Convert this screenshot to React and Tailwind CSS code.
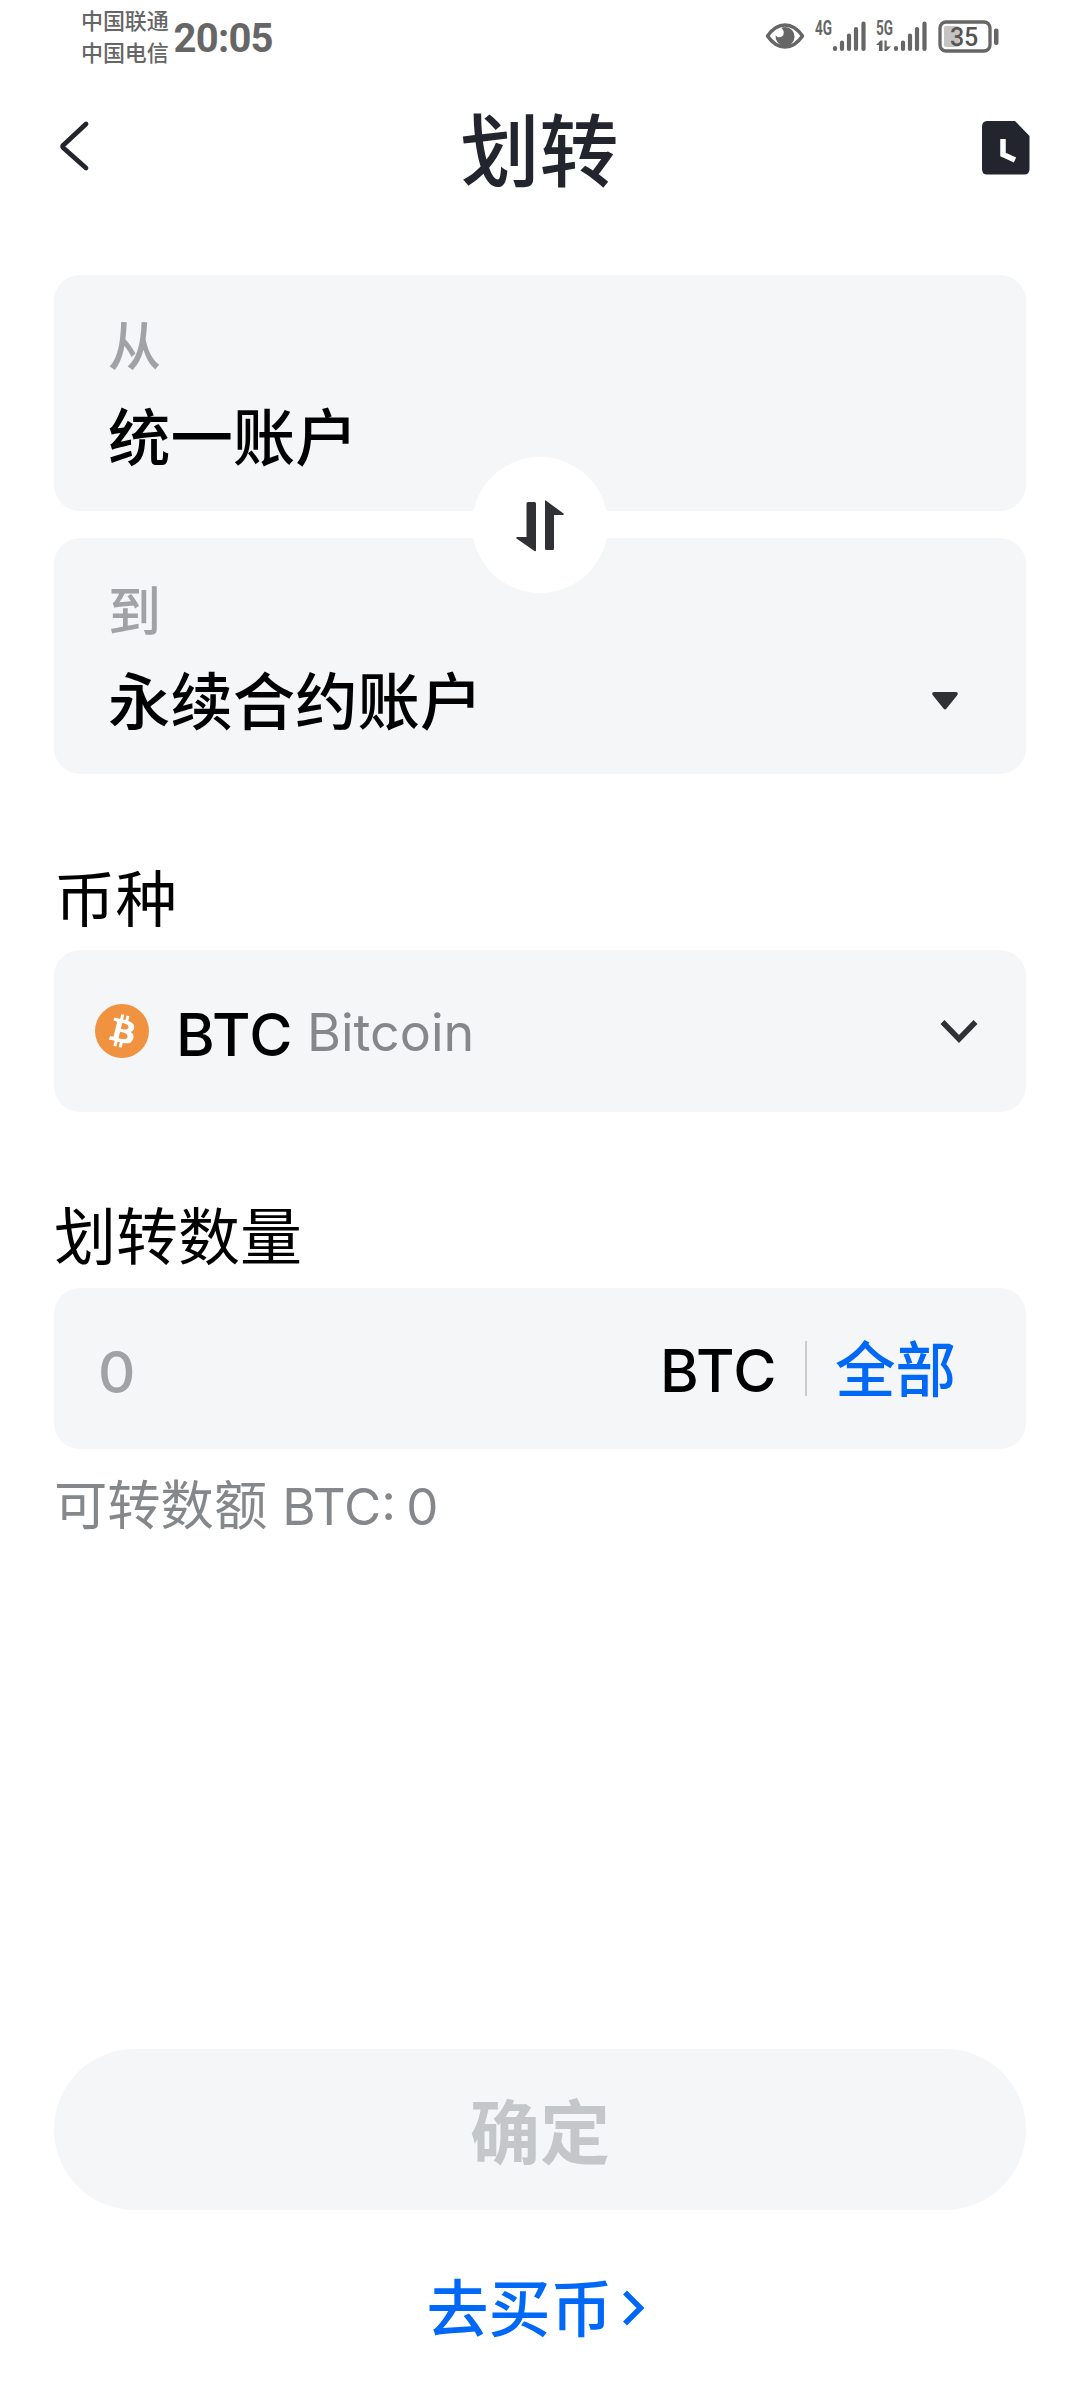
import React, { useState } from "react";

function SignalBars({ className }) {
  return (
    <svg className={className} width="34" height="32" viewBox="0 0 34 32" fill="none" stroke="#666" strokeWidth="4.2" strokeLinecap="round">
      <path d="M3 28v1M10 22.500v6.500M17 15.500v13.500M24 9v20M31.500 3.500v25.500" />
    </svg>
  );
}

function NetworkLabel({ text, data }) {
  return (
    <svg className="-mt-2 overflow-visible" width="18" height="40" viewBox="0 0 18 40" fill="#666">
      <text x="0" y="22.500" fontSize="20" fontWeight="700" textLength="17" lengthAdjust="spacingAndGlyphs" className="font-[Roboto,sans-serif]">
        {text}
      </text>
      {data && <path d="M3 39V33H0L4.500 28.500H6.500V39zM8.500 28.500h2.200v6H15l-4.500 4.500h-2z" />}
    </svg>
  );
}

function StatusBar() {
  return (
    <div className="flex h-[76px] items-start justify-between pl-[81px] pr-[80px] text-[#666]">
      <div className="flex">
        <div className="pt-[3px] text-[22px] leading-[32px] font-medium tracking-[-0.1px] font-['Noto_Sans_CJK_SC',sans-serif]">
          <div>中国联通</div>
          <div>中国电信</div>
        </div>
        <div className="ml-[5px] pt-[19px] font-[Roboto,sans-serif] text-[40px] leading-[40px] font-bold tracking-[-0.8px]">20:05</div>
      </div>
      <div className="flex">
        <svg className="mt-[22px]" width="40" height="28" viewBox="0 0 40 28" fill="none">
          <path d="M2.500 14C8 6 13.500 3 20 3s12 3 17.500 11C32 22 26.500 25 20 25S8 22 2.500 14z" stroke="#666" strokeWidth="3.500" strokeLinejoin="round" />
          <path d="M20 5a9.500 9.500 0 1 1-9.300 8c1.500 3.500 7.500 3 8-1.500.3-2.500-.7-4-2.200-5.500A9 9 0 0 1 20 5z" fill="#666" />
        </svg>
        <div className="ml-[10px] mt-5 flex">
          <NetworkLabel text="4G" />
          <SignalBars className="-ml-[1px]" />
        </div>
        <div className="ml-[10px] mt-5 flex">
          <NetworkLabel text="5G" data />
          <SignalBars className="-ml-[1px]" />
        </div>
        <svg className="mt-5 ml-[11px]" width="62" height="34" viewBox="0 0 62 34">
          <rect x="2" y="2" width="50" height="29" rx="6" fill="none" stroke="#666" strokeWidth="3.300" />
          <rect x="6" y="6" width="15" height="21" rx="2" fill="#c4c4c4" />
          <rect x="56" y="8.500" width="4.500" height="16.500" rx="2" fill="#666" />
          <text x="26" y="25.500" textAnchor="middle" fontSize="25" fontWeight="500" letterSpacing="-0.300" fill="#555" className="font-[Roboto,sans-serif]">
            35
          </text>
        </svg>
      </div>
    </div>
  );
}

function Header() {
  return (
    <header className="flex h-[199px] items-start justify-between pl-[58px] pr-[49px] text-[#22252e]">
      <button type="button" aria-label="返回" className="mt-[43px] w-[50px]">
        <svg width="34" height="54" viewBox="0 0 34 54" fill="none" stroke="currentColor" strokeWidth="4.800" strokeLinecap="round" strokeLinejoin="round">
          <path d="M28 5L5.500 26Q4 27.500 5.500 29L28 49" />
        </svg>
      </button>
      <h1 className="mt-[21px] -ml-[10px] text-[79px] leading-[110px] font-medium">划转</h1>
      <button type="button" aria-label="记录" className="mt-[45px]">
        <svg width="50" height="54" viewBox="0 0 50 54">
          <path d="M6 0H34L48.500 15V48Q48.500 53.500 43 53.500H6Q1 53.500 1 48V6Q1 0 6 0z" fill="currentColor" />
          <path d="M22 18v15.500L34 39" fill="none" stroke="#fff" strokeWidth="5.500" />
        </svg>
      </button>
    </header>
  );
}

export default function App() {
  const [amount, setAmount] = useState("");
  const [swapped, setSwapped] = useState(false);
  const accounts = swapped ? ["永续合约账户", "统一账户"] : ["统一账户", "永续合约账户"];

  return (
    <div className="flex h-[2400px] w-[1080px] flex-col overflow-hidden bg-white text-black font-[Inter,'Noto_Sans_CJK_SC',sans-serif]">
      <StatusBar />
      <Header />
      <main className="px-[54px]">
        <div className="relative flex flex-col gap-[27px]">
          <div className="h-[236px] rounded-[26px] bg-[#f4f6f7] px-[54px] pt-[36px]">
            <div className="text-[53px] leading-[72px] font-medium text-[#9fa3a6]">从</div>
            <div className="mt-[12px] text-[62.4px] leading-[88px] font-medium">{accounts[0]}</div>
          </div>
          <div className="flex h-[236px] justify-between rounded-[26px] bg-[#f4f6f7] pl-[54px] pr-[68px] pt-[38px]">
            <div>
              <div className="text-[53px] leading-[72px] font-medium text-[#9fa3a6]">到</div>
              <div className="mt-[11px] text-[62.4px] leading-[88px] font-medium">{accounts[1]}</div>
            </div>
            <svg className="mt-[116px]" width="26" height="18" viewBox="0 0 26 18" fill="#303134">
              <path d="M2 0H24Q27 .5 25 3.500L14.500 16.500Q13 18.500 11.500 16.500L1 3.500Q-1 .5 2 0z" />
            </svg>
          </div>
          <button
            type="button"
            aria-label="互换"
            onClick={() => setSwapped(!swapped)}
            className="absolute top-[182px] left-[418px] flex size-[136px] items-center justify-center rounded-full bg-white"
          >
            <svg className="mt-[2px]" width="48" height="52" viewBox="0 0 48 52" fill="#303134">
              <path d="M10.500 3.500Q10.500 2 12 2H18.500Q20 2 20 3.500V50Q20 52 18.500 51L.5 38.500Q-.5 37 1.500 37H10.500zM29 1.500Q29-.5 30.500 1L47.500 13.500Q48.500 15 46.500 15H38V48.500Q38 50 36.500 50H30.500Q29 50 29 48.500z" />
            </svg>
          </button>
        </div>

        <h2 className="mt-[82px] text-[61.5px] leading-[88px]">币种</h2>
        <button type="button" className="mt-[6px] flex h-[162px] w-full items-center rounded-[26px] bg-[#f4f6f7] pl-[41px] pr-[48px]">
          <svg className="size-[54px]" viewBox="0 0 32 32">
            <circle cx="16" cy="16" r="16" fill="#f09240" />
            <path
              fill="#fff"
              d="M23.189 14.020c.314-2.096-1.283-3.223-3.465-3.975l.708-2.840-1.728-.430-.690 2.765c-.454-.114-.920-.220-1.385-.326l.695-2.783L15.596 6l-.708 2.839c-.376-.086-.746-.170-1.104-.260l.002-.009-2.384-.595-.460 1.846s1.283.294 1.256.312c.700.175.826.638.805 1.006l-.806 3.235c.048.012.110.030.180.057l-.183-.045-1.130 4.532c-.086.212-.303.531-.793.410.018.025-1.256-.313-1.256-.313l-.858 1.978 2.250.561c.418.105.828.215 1.231.318l-.715 2.872 1.727.430.708-2.840c.472.127.930.245 1.378.357l-.706 2.828 1.728.430.715-2.866c2.948.558 5.164.333 6.097-2.333.752-2.146-.037-3.385-1.588-4.192 1.130-.260 1.980-1.003 2.207-2.538zm-3.950 5.538c-.533 2.147-4.148.986-5.320.695l.950-3.805c1.172.293 4.929.872 4.370 3.110zm.535-5.569c-.487 1.953-3.495.960-4.470.717l.860-3.450c.975.243 4.118.696 3.610 2.733z"
            />
          </svg>
          <span className="ml-[27px] mt-[7px] text-[59px] leading-[80px] font-medium tracking-[0.5px]">BTC</span>
          <span className="ml-[14px] mt-[3px] text-[52px] leading-[72px] text-[#85888b]">Bitcoin</span>
          <svg className="ml-auto" width="38" height="26" viewBox="0 0 38 26" fill="none" stroke="#303134" strokeWidth="5.500">
            <path d="M2.500 4L19 21L35.500 4" />
          </svg>
        </button>

        <h2 className="mt-[82px] text-[62px] leading-[88px]">划转数量</h2>
        <div className="mt-[6px] flex h-[161px] items-center rounded-[26px] bg-[#f4f6f7] pl-[44px] pr-[70px]">
          <input
            value={amount}
            onChange={(e) => setAmount(e.target.value)}
            placeholder="0"
            className="mt-[6px] w-[400px] text-[58px] leading-[80px] font-medium outline-none placeholder:text-[#9fa3a6]"
          />
          <span className="ml-auto mt-[4px] text-[59px] leading-[80px] font-medium tracking-[0.5px]">BTC</span>
          <span className="ml-[28px] h-[55px] w-0.5 bg-[#c9cbcd]" />
          <button type="button" className="ml-[28px] mt-[2px] text-[60.5px] leading-[88px] font-medium text-[#0068f7]">
            全部
          </button>
        </div>
        <p className="mt-[19px] flex items-baseline leading-[76px] text-[#85888b]">
          <span className="text-[53.3px]">可转数额</span>
          <span className="ml-[15px] text-[51px] [word-spacing:-4px]">BTC: 0</span>
        </p>
      </main>

      <footer className="mt-auto flex flex-col items-center px-[54px] pb-[46px]">
        <button type="button" disabled className="h-[161px] w-full rounded-full bg-[#f4f6f7] pt-[8px] text-[70px] leading-[100px] font-bold text-[#c3c7c9]">
          确定
        </button>
        <a className="mt-[56px] mr-[10px] flex items-center text-[62px] leading-[88px] font-medium text-[#0068f7]">
          去买币
          <svg className="ml-[9px] -mt-[5px]" width="22" height="36" viewBox="0 0 22 36" fill="none" stroke="currentColor" strokeWidth="5.500">
            <path d="M3 2.500L18.500 18L3 33.500" />
          </svg>
        </a>
      </footer>
    </div>
  );
}
